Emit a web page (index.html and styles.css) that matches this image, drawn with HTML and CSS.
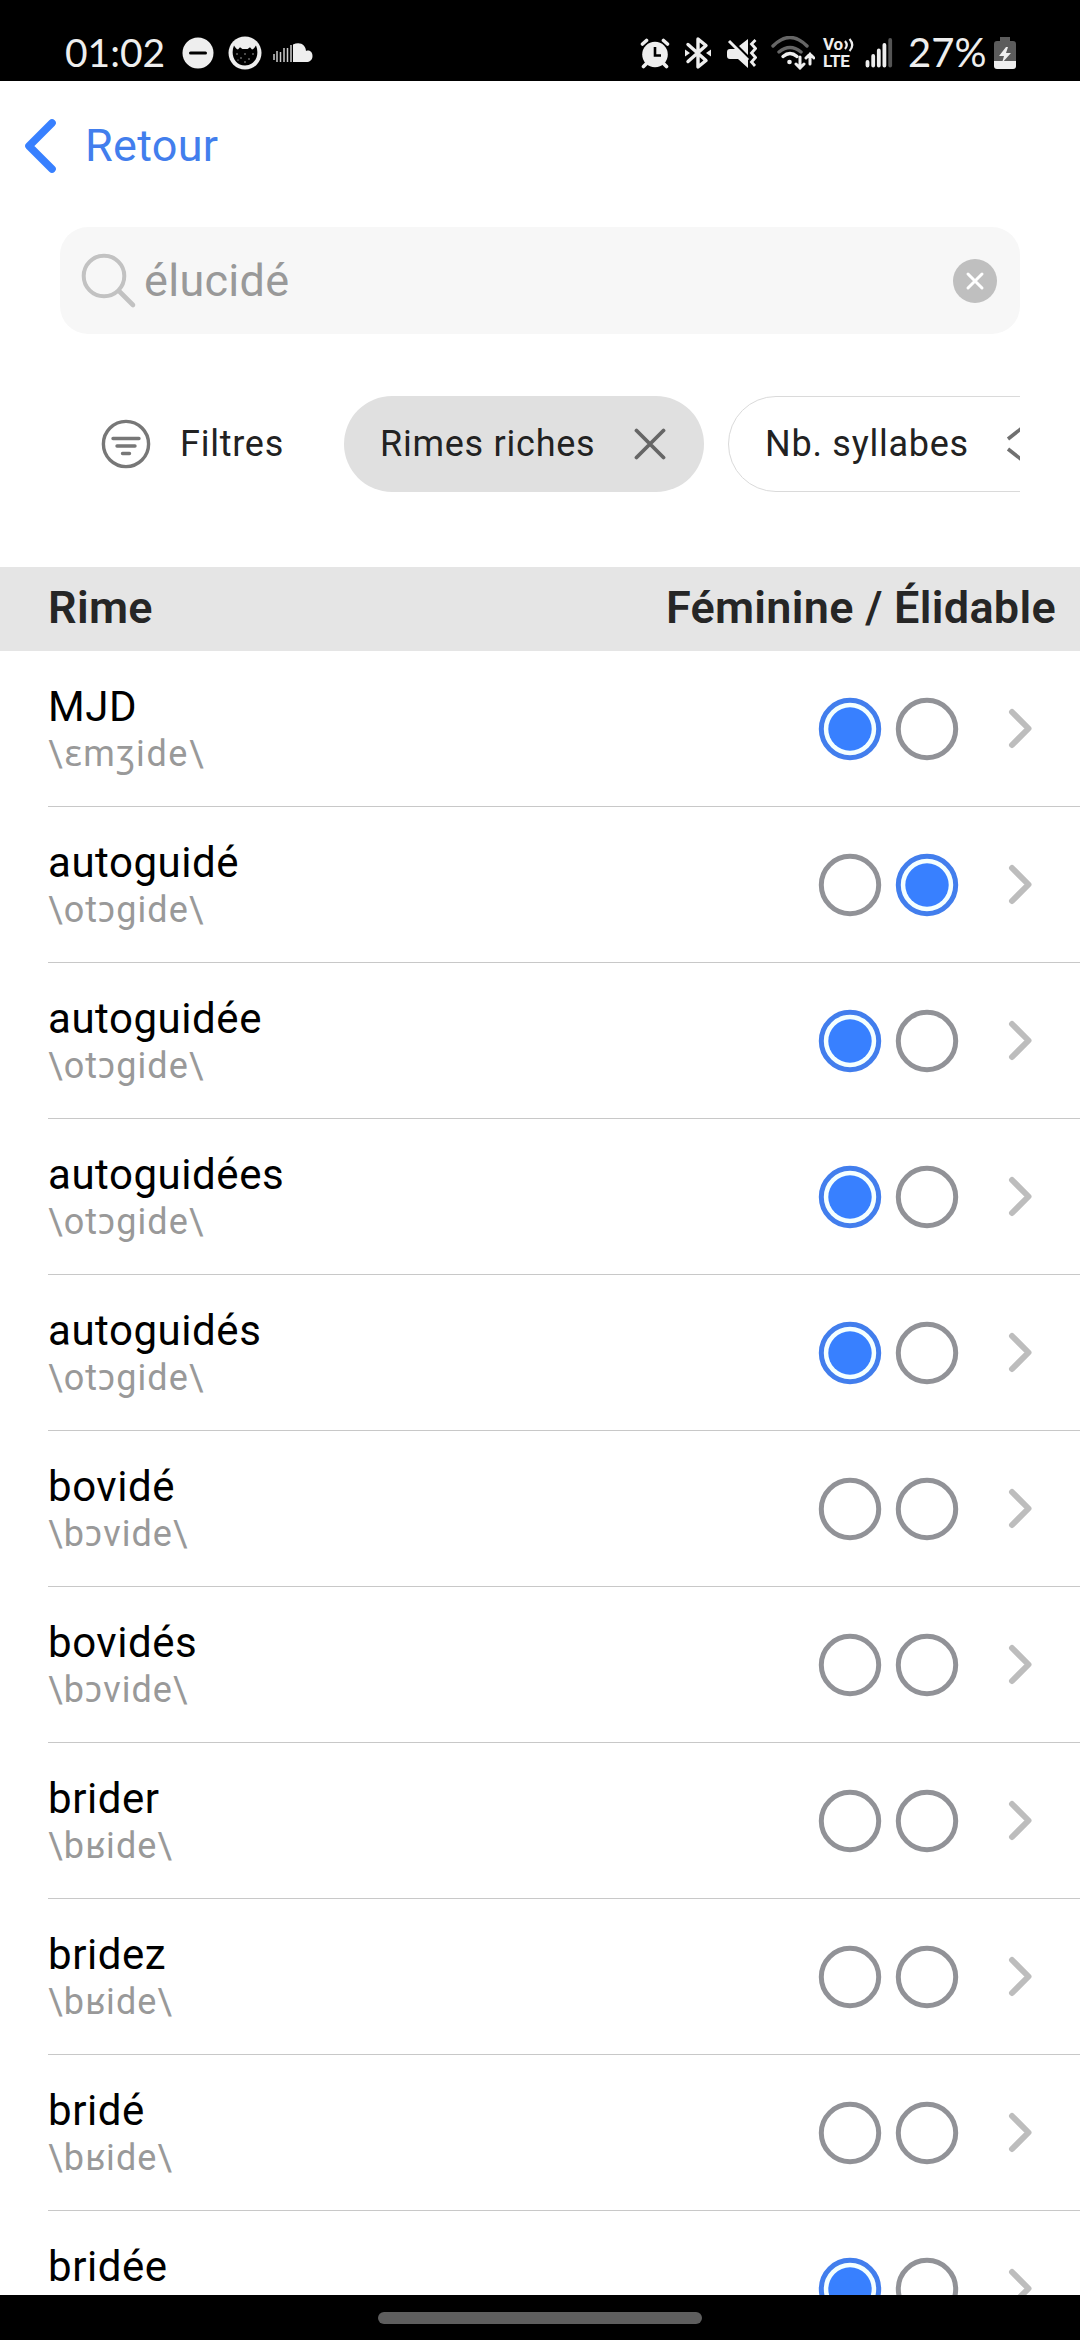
FILE: index.html
```
<!DOCTYPE html>
<html lang="fr">
<head>
<meta charset="utf-8">
<title>Rimes</title>
<link rel="stylesheet" href="styles.css">
</head>
<body>
<svg class="defs" width="0" height="0">
  <symbol id="on" viewBox="0 0 64 64"><circle cx="32" cy="32" r="28.700" fill="#f4ffff" stroke="#427eed" stroke-width="5"/><circle cx="32" cy="32" r="21.700" fill="#3880ff"/></symbol>
  <symbol id="off" viewBox="0 0 64 64"><circle cx="32" cy="32" r="28.700" fill="none" stroke="#919297" stroke-width="5"/></symbol>
  <symbol id="next" viewBox="0 0 24 42"><path d="M4 4 20.500 20.500 4 37" fill="none" stroke="#bdbdbd" stroke-width="6" stroke-linecap="round" stroke-linejoin="round"/></symbol>
</svg>
<div class="screen">
  <div class="status">
    <div class="status-left">
      <span class="clock">01:02</span>
      <svg class="dnd" width="32" height="32" viewBox="0 0 32 32"><circle cx="16" cy="16" r="15.500" fill="#eee"/><path d="M8.500 16h15" stroke="#000" stroke-width="3" stroke-linecap="round"/></svg>
      <svg class="cat" width="34" height="34" viewBox="0 0 34 34"><circle cx="17" cy="17" r="16.500" fill="#eee"/><path d="M6 9.500c1.500 2 2 3.500 4 4l2-2.200 2.400 1.800h5.200l2.400-1.800 2 2.200c2-.5 2.500-2 4-4C32 19 27 29.500 17 29.500S2 19 6 9.500Z" fill="#000"/><g fill="#ccc"><circle cx="9" cy="18" r=".7"/><circle cx="13" cy="22" r=".7"/><circle cx="17" cy="18" r=".7"/><circle cx="21" cy="23" r=".7"/><circle cx="25" cy="18" r=".7"/><circle cx="17" cy="26" r=".7"/><circle cx="10" cy="24" r=".6"/></g></svg>
      <svg class="cloud" width="40" height="20" viewBox="0 0 40 20"><path d="M1 11v6M4 8v11M7.500 9v10M11 5v14M14.500 5v14M18 2v17" stroke="#ccc" stroke-width="1.500"/><path d="M20 1.500C27-2 33 2 33 8c4-1.500 6.500 1.500 6.500 5 0 4-3 6-6 6H20Z" fill="#eee"/></svg>
    </div>
    <div class="status-right">
      <svg class="alarm" width="30" height="31" viewBox="0 0 30 31"><g stroke="#eee" fill="none" stroke-width="3.600" stroke-linecap="round"><path d="m2.500 6 4-3.500M27.500 6l-4-3.500M6 26l-2.500 2.500M24 26l2.500 2.500"/></g><circle cx="15" cy="16.500" r="12.800" fill="#eee"/><path d="M15 9v8.500h6" fill="none" stroke="#000" stroke-width="2.600"/></svg>
      <svg class="bt" width="28" height="34" viewBox="0 0 28 34"><path d="m4 8.500 18 16L14 31V3l8 6.500-18 16" fill="none" stroke="#eee" stroke-width="3.400" stroke-linejoin="round" stroke-linecap="round"/><path d="M1 13.500 6 17l-5 3.500ZM27 13.500 22 17l5 3.500Z" fill="#eee"/></svg>
      <svg class="mute" width="30" height="30" viewBox="0 0 30 30"><path d="M0 14q0-3 3-3h7l11 11v8L11 21H3q-3 0-3-3ZM12 8l9-7v16Z" fill="#eee"/><path d="m2 3 19 19" stroke="#eee" stroke-width="3"/><path d="m28.500 2-4 4 4 4.500-4 4.500 4 4.500-4 4.500 3.500 4" fill="none" stroke="#eee" stroke-width="2.800"/></svg>
      <svg class="wifi" width="44" height="34" viewBox="0 0 44 34"><g fill="none" stroke-width="3.400" stroke-linecap="round"><path d="M2 10Q19-7 36 10M8 16q11-9 22 0" stroke="#666"/><path d="M12 20.500q7-6 14 0" stroke="#eee"/><path d="M29 21v11m-4-4 4 4 4-4M39 28V18m-4 4 4-4 4 4" stroke="#eee" stroke-width="3"/></g><circle cx="18.500" cy="26" r="2.300" fill="#eee"/></svg>
      <div class="volte"><span class="vo">Vo<svg width="10" height="14" viewBox="0 0 10 14"><path d="M1 3q3.500 4 0 8M5.500 1q5.500 6 0 12" fill="none" stroke="#eee" stroke-width="2.200"/></svg></span><span>LTE</span></div>
      <svg class="signal" width="28" height="30" viewBox="0 0 28 30"><g stroke="#eee" stroke-width="3.800" stroke-linecap="round"><path d="M2.500 24v3.500M8.200 18v9.500M13.800 12.500v15M19.400 7v20.500"/><path d="M25.200 2v25.500" stroke="#555"/></g></svg>
      <span class="percent">27%</span>
      <svg class="battery" width="22" height="32" viewBox="0 0 22 32"><path d="M6 0h10v4h3q3 0 3 3v18H0V7q0-3 3-3h3Z" fill="#5c5c5c"/><path d="M0 24h22v5q0 3-3 3H3q-3 0-3-3Z" fill="#eee"/><path d="M12 10 5 19h5l-2 7 9-10h-5l2-6Z" fill="#eee"/></svg>
    </div>
  </div>

  <div class="toolbar">
    <svg width="34" height="56" viewBox="0 0 34 56"><path d="M28 5 5 28 28 51" fill="none" stroke="#3880ff" stroke-width="7.600" stroke-linecap="round" stroke-linejoin="round"/></svg>
    <span class="back">Retour</span>
  </div>

  <div class="search">
    <svg width="56" height="56" viewBox="0 0 56 56"><circle cx="23" cy="23" r="20.300" fill="none" stroke="#c2c2c2" stroke-width="4"/><path d="m38 38 14 14" stroke="#c2c2c2" stroke-width="4.600" stroke-linecap="round"/></svg>
    <span class="query">élucidé</span>
    <svg class="clear" width="44" height="44" viewBox="0 0 44 44"><circle cx="22" cy="22" r="22" fill="#bfbfbf"/><path d="m15 15 14 14M29 15 15 29" stroke="#fff" stroke-width="3" stroke-linecap="round"/></svg>
  </div>

  <div class="filters">
    <div class="chip plain">
      <svg width="50" height="50" viewBox="0 0 50 50"><g fill="none" stroke="#777" stroke-width="3.400" stroke-linecap="round"><circle cx="25" cy="25" r="22.600"/><path d="M12 19.500h26M16 27h18M21.500 34.500h7"/></g></svg>
      <span>Filtres</span>
    </div>
    <div class="chip active">
      <span>Rimes riches</span>
      <svg width="32" height="32" viewBox="0 0 32 32"><path d="m2.500 2.500 27 27M29.500 2.500l-27 27" stroke="#666" stroke-width="3.800" stroke-linecap="round"/></svg>
    </div>
    <div class="chip outline">
      <span>Nb. syllabes</span>
      <svg width="36" height="36" viewBox="0 0 36 36"><path d="M2 13 16 2l14 11M2 23l14 11 14-11" fill="none" stroke="#707070" stroke-width="3.600"/></svg>
    </div>
  </div>

  <div class="table-head"><span>Rime</span><span>Féminine / Élidable</span></div>

  <div class="list">
    <div class="row"><div class="word"><b>MJD</b><i class="wide">\ɛmʒide\</i></div><svg class="radio"><use href="#on"/></svg><svg class="radio"><use href="#off"/></svg><svg class="next"><use href="#next"/></svg></div>
    <div class="row"><div class="word"><b>autoguidé</b><i>\otɔgide\</i></div><svg class="radio"><use href="#off"/></svg><svg class="radio"><use href="#on"/></svg><svg class="next"><use href="#next"/></svg></div>
    <div class="row"><div class="word"><b>autoguidée</b><i>\otɔgide\</i></div><svg class="radio"><use href="#on"/></svg><svg class="radio"><use href="#off"/></svg><svg class="next"><use href="#next"/></svg></div>
    <div class="row"><div class="word"><b>autoguidées</b><i>\otɔgide\</i></div><svg class="radio"><use href="#on"/></svg><svg class="radio"><use href="#off"/></svg><svg class="next"><use href="#next"/></svg></div>
    <div class="row"><div class="word"><b>autoguidés</b><i>\otɔgide\</i></div><svg class="radio"><use href="#on"/></svg><svg class="radio"><use href="#off"/></svg><svg class="next"><use href="#next"/></svg></div>
    <div class="row"><div class="word"><b>bovidé</b><i>\bɔvide\</i></div><svg class="radio"><use href="#off"/></svg><svg class="radio"><use href="#off"/></svg><svg class="next"><use href="#next"/></svg></div>
    <div class="row"><div class="word"><b>bovidés</b><i>\bɔvide\</i></div><svg class="radio"><use href="#off"/></svg><svg class="radio"><use href="#off"/></svg><svg class="next"><use href="#next"/></svg></div>
    <div class="row"><div class="word"><b>brider</b><i>\bʁide\</i></div><svg class="radio"><use href="#off"/></svg><svg class="radio"><use href="#off"/></svg><svg class="next"><use href="#next"/></svg></div>
    <div class="row"><div class="word"><b>bridez</b><i>\bʁide\</i></div><svg class="radio"><use href="#off"/></svg><svg class="radio"><use href="#off"/></svg><svg class="next"><use href="#next"/></svg></div>
    <div class="row"><div class="word"><b>bridé</b><i>\bʁide\</i></div><svg class="radio"><use href="#off"/></svg><svg class="radio"><use href="#off"/></svg><svg class="next"><use href="#next"/></svg></div>
    <div class="row"><div class="word"><b>bridée</b></div><svg class="radio"><use href="#on"/></svg><svg class="radio"><use href="#off"/></svg><svg class="next"><use href="#next"/></svg></div>
  </div>

  <div class="navbar"><div class="handle"></div></div>
</div>
</body>
</html>
```
FILE: styles.css
```
* { box-sizing: border-box; }
body { margin: 0; background: #fff; font-family: Roboto, "Noto Sans", sans-serif; }
svg { display: block; flex: none; }
.defs { position: absolute; }
.screen { width: 1080px; height: 2340px; display: flex; flex-direction: column; overflow: hidden; }

.status { height: 81px; flex: none; background: #000; color: #eee; display: flex; justify-content: space-between; padding: 26px 64px 0 65px; font-family: Lato, sans-serif; }
.status-left, .status-right { display: flex; align-items: center; height: 54px; }
.clock { font-size: 39px; width: 117px; line-height: 52px; padding-bottom: 2px; }
.dnd { margin-right: 14px; }
.cat { margin-right: 11px; }
.alarm { margin-right: 14px; }
.bt { margin-right: 15px; }
.mute { margin-right: 14px; }
.wifi { margin-right: 8px; }
.volte { width: 33px; margin-right: 9px; display: flex; flex-direction: column; font: bold 17px/17px Roboto, sans-serif; letter-spacing: -0.3px; white-space: nowrap; }
.vo { display: flex; align-items: center; gap: 1px; }
.signal { margin-right: 15px; }
.percent { font-size: 40px; width: 82px; line-height: 52px; padding-bottom: 2px; margin-right: 4px; white-space: nowrap; }

.toolbar { height: 146px; flex: none; display: flex; align-items: center; padding: 0 24px 16px 24px; }
.back { font-size: 45px; color: #427eed; margin-left: 27px; line-height: 60px; letter-spacing: 0.3px; }

.search { height: 107px; flex: none; margin: 0 60px; padding: 0 23px 0 21px; border-radius: 28px; background: #f7f7f7; display: flex; align-items: center; }
.query { flex: 1; margin-left: 7px; font-size: 45px; color: #999; line-height: 60px; letter-spacing: 0.3px; }

.filters { height: 96px; flex: none; margin: 62px 60px 75px; display: flex; overflow: hidden; }
.chip { flex: none; height: 96px; border-radius: 48px; display: flex; align-items: center; font-size: 36px; letter-spacing: 0.75px; color: #222; white-space: nowrap; }
.plain { width: 260px; padding-left: 41px; margin-right: 24px; }
.plain svg { margin-right: 29px; }
.active { width: 360px; background: #e0e0e0; padding: 0 38px 0 36px; justify-content: space-between; margin-right: 24px; }
.outline { width: 400px; border: 1px solid #dadada; padding-left: 36px; }
.outline svg { margin-left: 37px; }

.table-head { height: 84px; flex: none; background: #e5e5e5; color: #262626; display: flex; justify-content: space-between; align-items: center; padding: 0 24px 3px 48px; font-size: 45px; font-weight: 600; letter-spacing: 0.3px; }

.list { flex: 1; min-height: 0; overflow: hidden; }
.row { height: 156px; margin-left: 48px; padding-right: 48px; border-bottom: 1px solid #c8c8c8; display: flex; }
.word { flex: 1; padding-top: 31px; }
.word b { display: block; font-weight: 400; font-size: 42px; line-height: 50px; letter-spacing: 0.55px; color: #000; }
.word i { display: block; font-style: normal; font-size: 36px; line-height: 44px; letter-spacing: 1px; color: #999; }
.word .wide { letter-spacing: 1.6px; }
.radio { width: 64px; height: 64px; margin: 46px 13px 0 0; }
.next { width: 24px; height: 42px; margin: 57px 0 0 36px; }

.navbar { height: 45px; flex: none; background: #000; display: flex; justify-content: center; padding-top: 17px; }
.handle { width: 324px; height: 12px; border-radius: 6px; background: #5e5e5e; }
```
